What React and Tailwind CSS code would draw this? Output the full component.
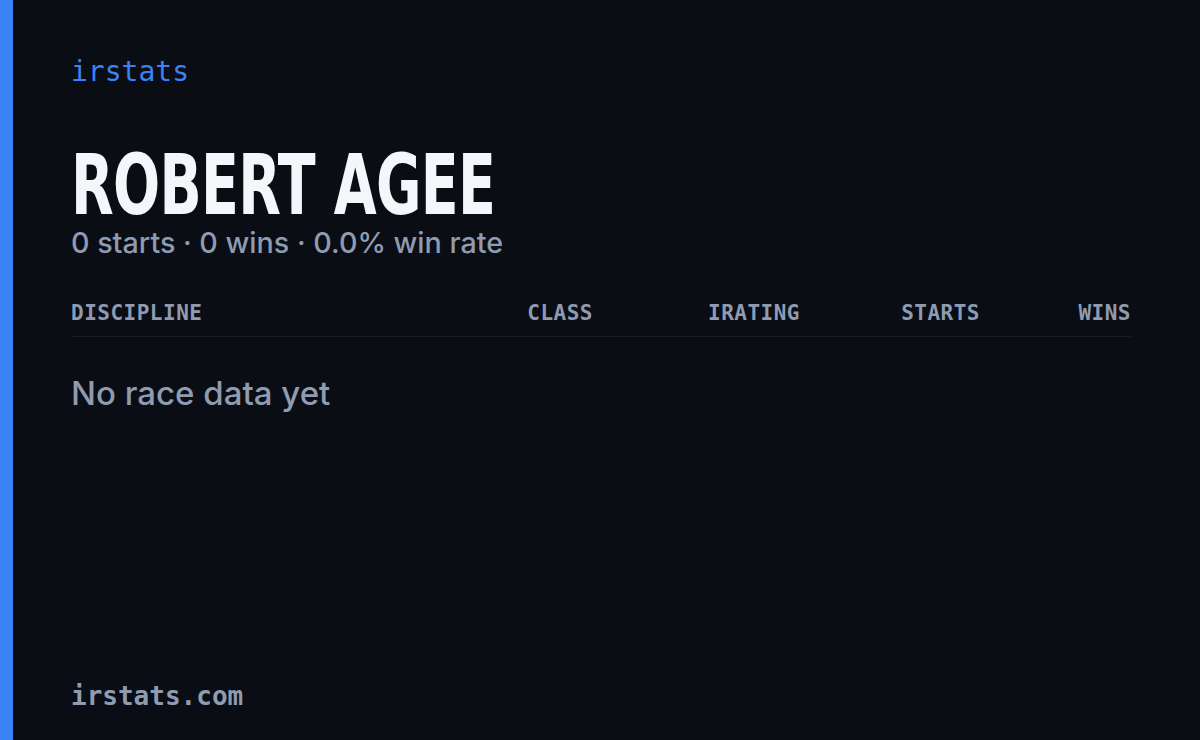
const columns = ['CLASS', 'IRATING', 'STARTS', 'WINS'];

const App = () => {
  return (
    <div className="flex h-[740px] w-[1200px] overflow-hidden bg-[#0a0d14]">
      <div className="w-[13px] shrink-0 bg-[#3b82f6]" />

      <div className="flex flex-1 flex-col pl-[58px] pr-[69px] pt-[55px] pb-[28px]">
        <div className="font-['DejaVu_Sans_Mono',monospace] text-[28px] font-normal leading-[34px] text-[#3b82f6]">
          irstats
        </div>

        <h1 className="mt-[56px] origin-left scale-x-[0.66] whitespace-nowrap font-['DejaVu_Sans',sans-serif] text-[84px] font-bold leading-[80px] tracking-[-1px] text-[#f5f6fa]">
          ROBERT AGEE
        </h1>

        <p className="mt-[2px] font-['Inter',sans-serif] text-[28.7px] font-medium leading-[32px] text-[#8e9bb0]">
          0 starts · 0 wins · 0.0% win rate
        </p>

        <div className="mt-[41px] grid grid-cols-[1fr_120px_207px_180px_151px] border-b border-[#161b25] pb-[10px] font-['DejaVu_Sans_Mono',monospace] text-[21px] font-bold leading-[26px] tracking-[0.5px] text-[#8e9bb0]">
          <div>DISCIPLINE</div>
          {columns.map((col) => (
            <div key={col} className="text-right">{col}</div>
          ))}
        </div>

        <div className="mt-[35px] font-['Inter',sans-serif] text-[33px] font-medium leading-[42px] text-[#8e9bb0]">
          No race data yet
        </div>

        <div className="mt-auto font-['DejaVu_Sans_Mono',monospace] text-[26px] font-bold leading-[32px] text-[#8e9bb0]">
          irstats.com
        </div>
      </div>
    </div>
  );
};

export default App;
